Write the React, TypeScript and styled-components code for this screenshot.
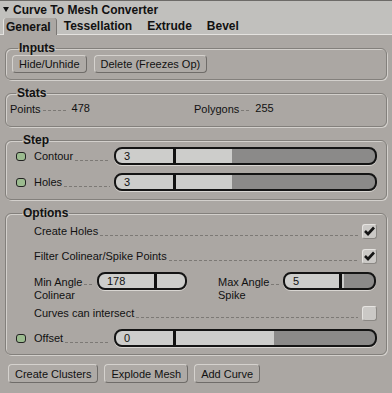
import React from 'react'
import styled, { createGlobalStyle } from 'styled-components'

const Global = createGlobalStyle`
  html, body {
    margin: 0;
    padding: 0;
    background: #aba7a3;
  }
  * { box-sizing: border-box; }
`;

const Panel = styled.div`
  width: 392px;
  height: 393px;
  background: #aba7a3;
  font-family: 'Liberation Sans', Arial, sans-serif;
  font-size: 11px;
  color: #111;
  overflow: hidden;
`;

const TitleBar = styled.div`
  height: 18px;
  display: flex;
  align-items: center;
  gap: 4px;
  padding-left: 3px;
  background: #c1c0bd;
  border-top: 1px solid #6d6b68;
  font-weight: 700;
  font-size: 12px;
`;

const Arrow = styled.span`
  width: 0;
  height: 0;
  border-left: 3.5px solid transparent;
  border-right: 3.5px solid transparent;
  border-top: 5px solid #111;
`;

const TabBar = styled.div`
  height: 17px;
  display: flex;
  align-items: stretch;
  padding-left: 3px;
  background: #c1c0bd;
  border-bottom: 1px solid #e4e2df;
`;

const Tab = styled.div<{ $active?: boolean }>`
  display: flex;
  align-items: center;
  padding: 0 ${p => (p.$active ? '5px' : '8px')} 0 ${p => (p.$active ? '2px' : '7px')};
  font-weight: 700;
  font-size: 12px;
  background: ${p => (p.$active ? '#aba7a3' : 'transparent')};
  border-left: ${p => (p.$active ? '1px solid #e4e2df' : 'none')};
  border-right: ${p => (p.$active ? '1px solid #7a7774' : 'none')};
  border-top-left-radius: 3px;
  border-top-right-radius: 3px;
  margin-bottom: ${p => (p.$active ? '-1px' : '0')};
`;

const Body = styled.div`
  padding: 6px 5px 0 5px;
  display: flex;
  flex-direction: column;
`;

const Group = styled.fieldset<{ $pl?: number; $pt?: number; $pb?: number; $gap?: number }>`
  margin: 0 0 1px 0;
  padding: ${p => p.$pt ?? 0}px 9px ${p => p.$pb ?? 8}px ${p => p.$pl ?? 10}px;
  border: 1px solid #83807c;
  border-radius: 6px;
  box-shadow: 1px 1px 0 #d3d0cc, inset 1px 1px 0 #d3d0cc;
  display: flex;
  flex-direction: column;
  gap: ${p => p.$gap ?? 8}px;
  & + & { margin-top: 5px; }
`;

const Legend = styled.legend`
  font-weight: 700;
  font-size: 12px;
  line-height: 14px;
  padding: 0 1px;
  margin-left: 6px;
`;

const ButtonRow = styled.div<{ $gap: number }>`
  display: flex;
  gap: ${p => p.$gap}px;
`;

const Button = styled.button<{ $h?: number }>`
  height: ${p => p.$h ?? 18}px;
  padding: 0 6px;
  font-family: 'Liberation Sans', Arial, sans-serif;
  font-size: 11px;
  color: #111;
  background: #aeaaa6;
  border: 1px solid;
  border-color: #d5d2ce #6f6c69 #6f6c69 #d5d2ce;
  border-radius: 4px;
`;

const BottomBar = styled(ButtonRow)`
  margin-top: 8px;
  padding-left: 3px;
`;

const StatsRow = styled.div`
  display: grid;
  grid-template-columns: 184px 1fr;
  height: 18px;
  align-items: center;
`;

const StatCell = styled.div`
  display: flex;
  align-items: center;
`;

const Dashes = styled.span<{ $w?: number; $mb?: number }>`
  flex: ${p => (p.$w ? `0 0 ${p.$w}px` : '1')};
  height: 1px;
  align-self: flex-end;
  margin: 0 4px ${p => p.$mb ?? 4}px 2px;
  background-image: linear-gradient(to right, #7c7975 60%, transparent 60%);
  background-size: 5px 1px;
  background-repeat: repeat-x;
`;

const Value = styled.span`
  margin-top: -3px;
`;

const Row = styled.div<{ $h?: number; $top?: boolean }>`
  display: flex;
  align-items: ${p => (p.$top ? 'flex-start' : 'center')};
  height: ${p => p.$h ?? 18}px;
`;

const Led = styled.span`
  width: 10px;
  height: 9px;
  margin-right: 8px;
  background: #9bbb8f;
  border: 1.5px solid #222;
  border-radius: 3px;
  flex: none;
`;

const Spacer = styled.span`
  width: 18px;
  flex: none;
`;

const LabelCol = styled.div<{ $w: number; $ml?: number }>`
  width: ${p => p.$w}px;
  margin-left: ${p => p.$ml ?? 0}px;
  display: flex;
  align-items: center;
  height: 100%;
  flex: none;
`;

const Label = styled.span`
  white-space: nowrap;
`;

const TwoLine = styled.span`
  line-height: 13px;
  margin-top: 9px;
  white-space: nowrap;
`;

const Slider = styled.div<{ $w?: number; $light: number }>`
  position: relative;
  ${p => (p.$w ? `width: ${p.$w}px; flex: none;` : 'flex: 1;')}
  height: 18px;
  border: 2px solid #141414;
  border-radius: 8px;
  padding-left: 8px;
  display: flex;
  align-items: center;
  background: linear-gradient(to right, #cdcdcb ${p => p.$light}%, #8b8a89 ${p => p.$light}%);
  box-shadow: 0 1px 0 #d9d6d2;
`;

const Marker = styled.span<{ $at: number }>`
  position: absolute;
  top: 0;
  bottom: 0;
  left: ${p => p.$at}%;
  width: 3px;
  background: #111;
`;

const Check = styled.span`
  width: 15px;
  height: 15px;
  flex: none;
  border-radius: 3px;
  background: #cbc9c6;
  border: 1px solid;
  border-color: #e6e4e1 #8b8884 #8b8884 #e6e4e1;
  display: flex;
  align-items: center;
  justify-content: center;
`;

function CheckBox({ on }: { on?: boolean }) {
  return (
    <Check>
      {on && (
        <svg width="11" height="10" viewBox="0 0 11 10">
          <path d="M1 5 L4 8 L10 1.5" stroke="#151515" strokeWidth="2.6" fill="none" />
        </svg>
      )}
    </Check>
  )
}

function SliderRow(props: { led?: boolean; label: string; value: string; light: number; at: number }) {
  const { led, label, value, light, at } = props;
  return (
    <Row>
      {led ? <Led /> : <Spacer />}
      <LabelCol $w={80}>
        <Label>{label}</Label>
        <Dashes />
      </LabelCol>
      <Slider $light={light}>
        {value}
        <Marker $at={at} />
      </Slider>
    </Row>
  )
}

function CheckRow({ label, on }: { label: string; on?: boolean }) {
  return (
    <Row>
      <Spacer />
      <Label>{label}</Label>
      <Dashes />
      <CheckBox on={on} />
    </Row>
  )
}

export default function App() {
  return (
    <Panel>
      <Global />
      <TitleBar>
        <Arrow />
        Curve To Mesh Converter
      </TitleBar>
      <TabBar>
        <Tab $active>General</Tab>
        <Tab>Tessellation</Tab>
        <Tab>Extrude</Tab>
        <Tab>Bevel</Tab>
      </TabBar>
      <Body>
        <Group $pl={6} $pb={6} $gap={0}>
          <Legend>Inputs</Legend>
          <ButtonRow $gap={7}>
            <Button>Hide/Unhide</Button>
            <Button>Delete (Freezes Op)</Button>
          </ButtonRow>
        </Group>

        <Group $pl={4} $gap={0}>
          <Legend>Stats</Legend>
          <StatsRow>
            <StatCell>
              <Label>Points</Label>
              <Dashes $w={25} />
              <Value>478</Value>
            </StatCell>
            <StatCell>
              <Label>Polygons</Label>
              <Dashes $w={10} />
              <Value>255</Value>
            </StatCell>
          </StatsRow>
        </Group>

        <Group>
          <Legend>Step</Legend>
          <SliderRow led label="Contour" value="3" light={44.6} at={22} />
          <SliderRow led label="Holes" value="3" light={44.6} at={22} />
        </Group>

        <Group $gap={7} $pt={2} $pb={7}>
          <Legend>Options</Legend>
          <CheckRow label="Create Holes" on />
          <CheckRow label="Filter Colinear/Spike Points" on />
          <Row $h={25} $top>
            <Spacer />
            <LabelCol $w={63}>
              <TwoLine>Min Angle<br />Colinear</TwoLine>
              <Dashes $mb={12} />
            </LabelCol>
            <Slider $w={90} $light={100}>
              178
              <Marker $at={64} />
            </Slider>
            <LabelCol $w={65} $ml={31}>
              <TwoLine>Max Angle<br />Spike</TwoLine>
              <Dashes $mb={12} />
            </LabelCol>
            <Slider $w={93} $light={66}>
              5
              <Marker $at={61} />
            </Slider>
          </Row>
          <CheckRow label="Curves can intersect" />
          <SliderRow led label="Offset" value="0" light={61} at={22} />
        </Group>

        <BottomBar $gap={6}>
          <Button $h={19}>Create Clusters</Button>
          <Button $h={19}>Explode Mesh</Button>
          <Button $h={19}>Add Curve</Button>
        </BottomBar>
      </Body>
    </Panel>
  )
}
